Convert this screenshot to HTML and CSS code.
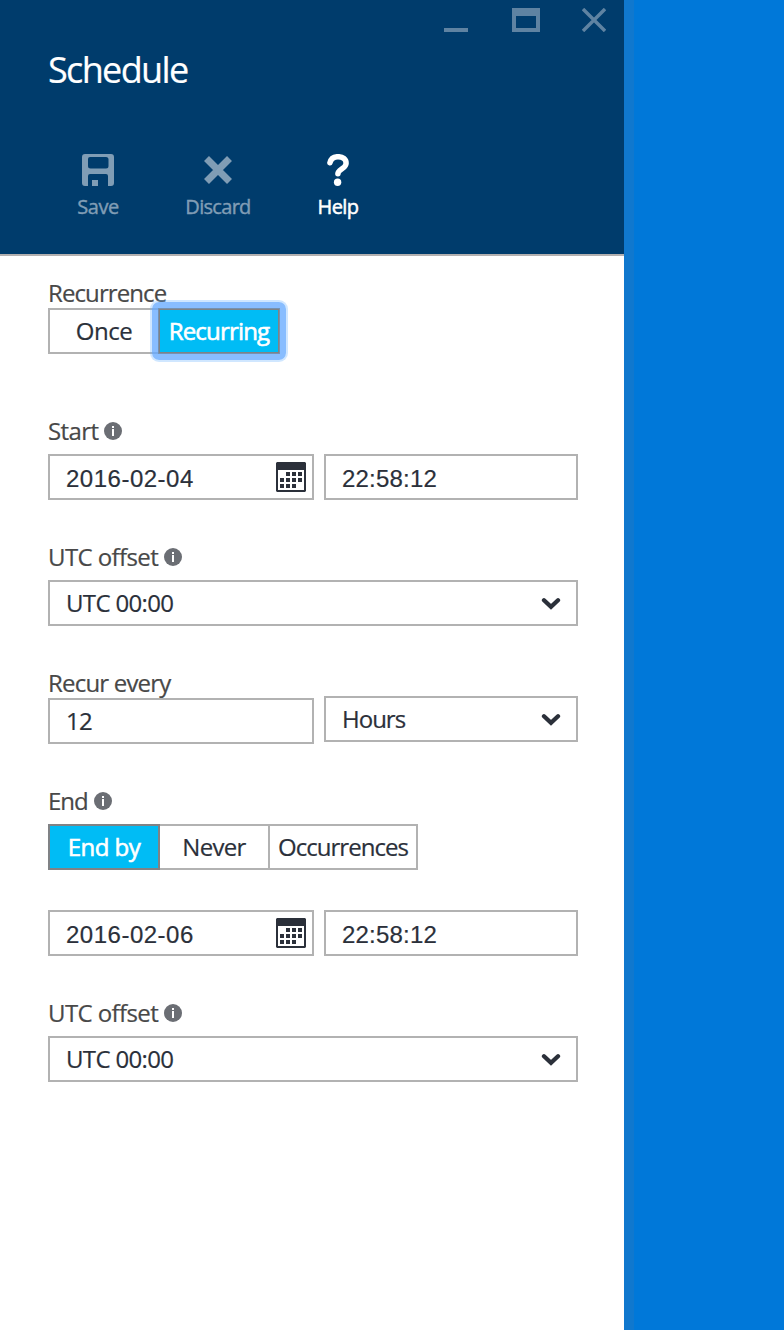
FILE: index.html
```html
<!DOCTYPE html>
<html lang="en">
<head>
<meta charset="utf-8">
<title>Schedule</title>
<link rel="stylesheet" href="styles.css">
</head>
<body>
<svg class="defs" width="0" height="0" aria-hidden="true">
  <symbol id="info" viewBox="0 0 18 18"><circle cx="9" cy="9" r="9" fill="#6b6e74"/><path d="M8 4h2v2H8zM8 7h2v7H8z" fill="#fff"/></symbol>
  <symbol id="calendar" viewBox="0 0 30 30"><path fill-rule="evenodd" d="M1 0h28l1 1v28l-1 1H1l-1-1V1zM2 8v20h26V8z"/><path d="M10 10h4v4h-4zM16 10h4v4h-4zM22 10h4v4h-4zM4 16h4v4H4zM10 16h4v4h-4zM16 16h4v4h-4zM22 16h4v4h-4zM4 22h4v4H4zM10 22h4v4h-4zM16 22h4v4h-4z"/></symbol>
  <symbol id="chevron" viewBox="0 0 20 14"><path d="M3 3.300l7 6.600 7-6.600" fill="none" stroke="currentColor" stroke-width="4.300" stroke-linecap="round" stroke-linejoin="miter"/></symbol>
</svg>
<div class="blade">
  <header class="header">
    <div class="window-controls">
      <svg width="24" height="24"><path d="M0 20h24v4H0z"/></svg>
      <svg width="28" height="24"><path fill-rule="evenodd" d="M0 0h28v24H0zM4 8v12h20V8z"/></svg>
      <svg width="24" height="24"><path d="M1 1l22 22M23 1L1 23" fill="none" stroke="#5f83a2" stroke-width="3.400"/></svg>
    </div>
    <h1 class="title">Schedule</h1>
    <nav class="toolbar">
      <button class="command disabled"><svg width="32" height="32"><path fill-rule="evenodd" d="M3 0h26q3 0 3 3v26q0 3-3 3h-3V22q0-2-2-2H8q-2 0-2 2v10H3q-3 0-3-3V3q0-3 3-3zM8 3q-2 0-2 2v7q0 2.500 2.500 2.500h15.500q2.500 0 2.500-2.500V5.500Q26.500 3 24 3zM10 26h6v6h-6z"/></svg><span>Save</span></button>
      <button class="command disabled discard"><svg width="32" height="32"><path d="M4.500 4.500l23 23M27.500 4.500l-23 23" fill="none" stroke="currentColor" stroke-width="7"/></svg><span>Discard</span></button>
      <button class="command help"><svg width="32" height="32"><path d="M7.900 8.800C8.800 5 11.500 2.700 16 2.700c4.900 0 8.100 2.600 8.100 6.500 0 5.600-8.200 6-8.200 10.600" fill="none" stroke="currentColor" stroke-width="5.500" stroke-linecap="round"/><circle cx="15.600" cy="28.300" r="3.700"/></svg><span>Help</span></button>
    </nav>
  </header>
  <main class="form">
    <section class="field recurrence">
      <label class="label">Recurrence</label>
      <div class="options">
        <button class="option once">Once</button><button class="option recurring selected focused">Recurring</button>
      </div>
    </section>
    <section class="field spaced">
      <label class="label start">Start<svg class="info"><use href="#info"/></svg></label>
      <div class="row">
        <div class="input date">2016-02-04<svg class="calendar"><use href="#calendar"/></svg></div>
        <div class="input time">22:58:12</div>
      </div>
    </section>
    <section class="field spaced">
      <label class="label offset">UTC offset<svg class="info"><use href="#info"/></svg></label>
      <div class="input select">UTC 00:00<svg class="chevron"><use href="#chevron"/></svg></div>
    </section>
    <section class="field interval">
      <label class="label">Recur every</label>
      <div class="row">
        <div class="input number">12</div>
        <div class="input select unit">Hours<svg class="chevron"><use href="#chevron"/></svg></div>
      </div>
    </section>
    <section class="field spaced end">
      <label class="label end-label">End<svg class="info"><use href="#info"/></svg></label>
      <div class="options">
        <button class="option end-by selected">End by</button><button class="option never">Never</button><button class="option occurrences">Occurrences</button>
      </div>
    </section>
    <section class="field">
      <div class="row">
        <div class="input date">2016-02-06<svg class="calendar"><use href="#calendar"/></svg></div>
        <div class="input time">22:58:12</div>
      </div>
    </section>
    <section class="field spaced">
      <label class="label offset">UTC offset<svg class="info"><use href="#info"/></svg></label>
      <div class="input select">UTC 00:00<svg class="chevron"><use href="#chevron"/></svg></div>
    </section>
  </main>
</div>
</body>
</html>
```
FILE: styles.css
```css
* { box-sizing: border-box; }
body {
  margin: 0;
  background: #0078d9;
  font: 24px/28px "Open Sans", sans-serif;
  color: #2b303a;
  -webkit-text-stroke: .2px;
}
svg { display: block; flex: none; fill: currentColor; }
.defs { position: absolute; }
button { border: 0; padding: 0; background: none; font: inherit; color: inherit; }

.blade {
  width: 634px;
  height: 1330px;
  border-right: 10px solid #1078ce;
  background: #fff;
}
.header {
  height: 256px;
  border-bottom: 2px solid #b3b0b0;
  background: #003c6c;
  color: #fff;
}
.window-controls {
  display: flex;
  justify-content: flex-end;
  gap: 44px;
  height: 40px;
  padding: 8px 18px 0 0;
  color: #5f83a2;
}
.window-controls svg:last-child { margin-left: -2px; }
.title {
  margin: 0;
  padding-left: 48px;
  font-size: 36px;
  font-weight: 400;
  line-height: 60px;
  letter-spacing: -1.65px;
}
.toolbar { display: flex; padding: 54px 0 0 38px; }
.command {
  display: flex;
  flex-direction: column;
  align-items: center;
  width: 120px;
  gap: 7px;
  font-size: 20px;
  letter-spacing: -.5px;
  -webkit-text-stroke: .4px;
}
.disabled { color: #809db5; }
.discard { letter-spacing: -.7px; }
.help { letter-spacing: -.6px; -webkit-text-stroke: .5px; }

.form {
  display: flex;
  flex-direction: column;
  gap: 44px;
  width: 578px;
  padding: 24px 0 0 48px;
}
.field { display: flex; flex-direction: column; }
.spaced { gap: 8px; }
.recurrence { margin-bottom: 20px; }
.end { margin-bottom: -4px; }
.label {
  display: flex;
  align-items: center;
  height: 28px;
  padding-bottom: 2px;
  color: #484848;
  letter-spacing: -.9px;
}
.interval .label { letter-spacing: -.8px; }
.start, .offset { letter-spacing: -.6px; }
.end-label { letter-spacing: -1px; }
.info { width: 18px; height: 18px; margin-left: 6px; }
.row { display: flex; gap: 10px; }

.input {
  display: flex;
  align-items: center;
  justify-content: space-between;
  height: 46px;
  padding: 0 16px;
  border: 2px solid #b2b2b2;
  letter-spacing: -.65px;
}
.date, .number { width: 266px; }
.time, .unit { width: 254px; }
.date, .time {
  padding: 4px 6px 0 16px;
  font-family: "Liberation Sans", Arial, sans-serif;
  letter-spacing: .5px;
}
.time { letter-spacing: .2px; }
.unit { margin-top: -2px; letter-spacing: -1px; }
.calendar { width: 30px; height: 30px; margin-top: -4px; }
.chevron { width: 20px; height: 14px; margin: 2px -1px 0 0; }
.interval .row { height: 46px; }
.unit { height: 46px; }

.options { display: flex; }
.option {
  height: 46px;
  border: 2px solid #b2b2b2;
  margin-right: -2px;
}
.selected {
  position: relative;
  border-color: #808285;
  background: #00bcf5;
  color: #fff;
  -webkit-text-stroke: .6px;
}
/* Focus ring: pale inner edge, solid band, faint outer edge */
.focused::after {
  content: "";
  position: absolute;
  inset: -8px;
  border: 6px solid rgba(98, 168, 255, .76);
  border-radius: 7px;
  box-shadow: 0 0 0 2px rgba(98, 174, 255, .3), inset 0 0 0 1px rgba(98, 174, 255, .35);
}
.once { width: 112px; letter-spacing: -.5px; }
.recurring { width: 122px; letter-spacing: -.8px; }
.end-by { width: 112px; letter-spacing: -.55px; }
.never { width: 112px; letter-spacing: -.7px; }
.occurrences { width: 150px; letter-spacing: -.95px; }
```
